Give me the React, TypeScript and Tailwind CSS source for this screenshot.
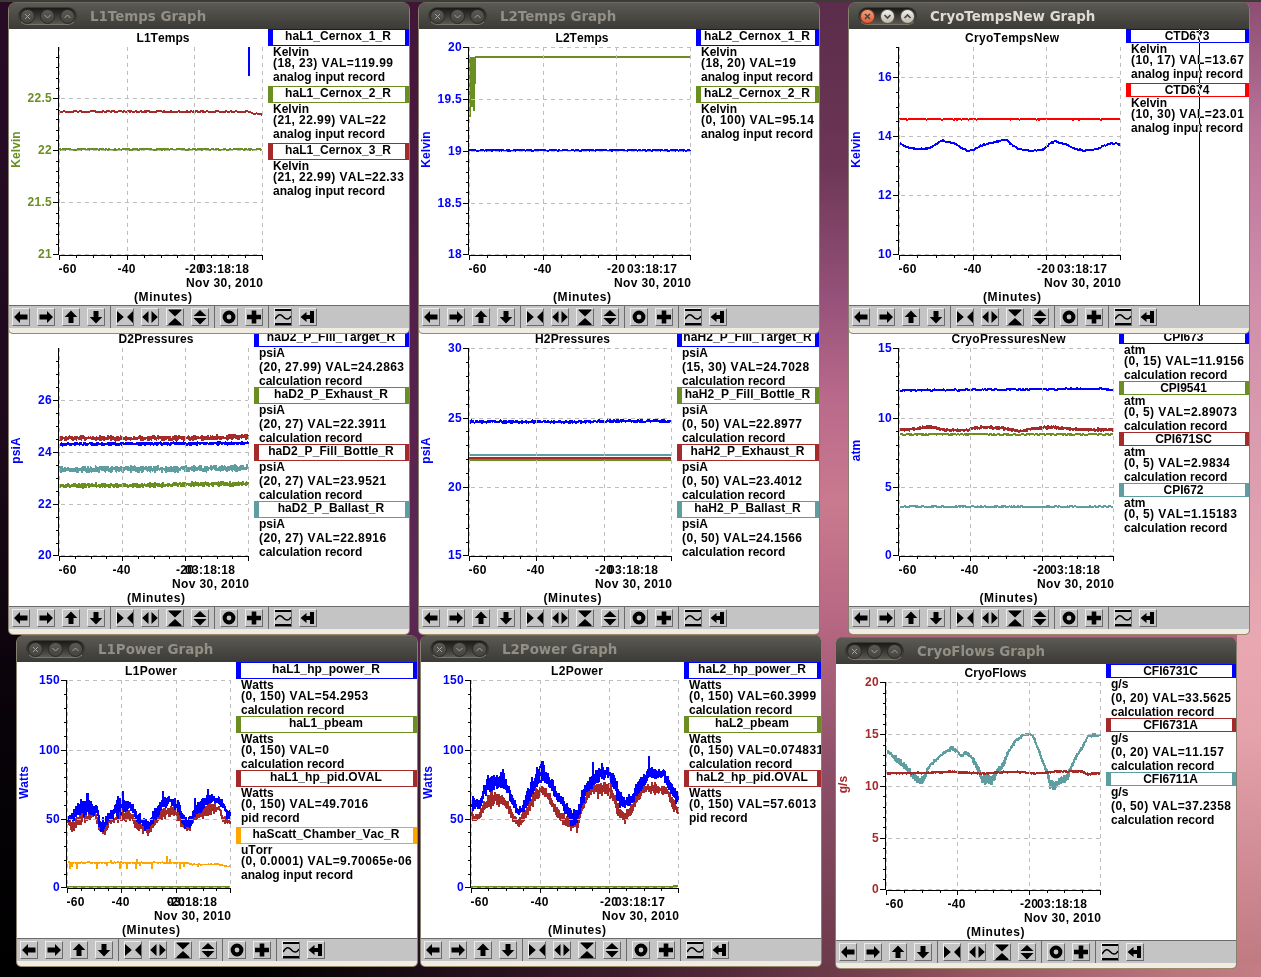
import type { ReactNode } from "react";

const BLUE = "#0000ff";
const GREEN = "#6b8e23";
const BROWN = "#a52a2a";
const TEAL = "#5f9ea0";
const ORANGE = "#ffa500";
const RED = "#ff0000";

// [x, y] for a line, [x, top, bottom] for a noisy band
type Anchor = [number, number] | [number, number, number];

interface Trace {
  color: string;
  points: Anchor[];
  noise?: number;
  width?: number;
  spikes?: [number, number][];
}

interface Channel {
  name: string;
  unit: string;
  value: string;
  record: string;
  color: string;
}

interface Graph {
  name: string;
  x: number;
  y: number;
  active?: boolean;
  cursor?: number;
  plotWidth: number;
  titleWidth: number;
  unit: string;
  axisColor: string;
  min: number;
  max: number;
  major: number;
  minor: number;
  time: string;
  traces: Trace[];
  channels: Channel[];
}

const LEFT = 50;
const TOP = 18;
const BOTTOM = 225;

const graphs: Graph[] = [
  {
    name: "D2Pressures", x: 9, y: 330, plotWidth: 245, titleWidth: 75,
    unit: "psiA", axisColor: BLUE, min: 20, max: 27.99, major: 2, minor: 0.5, time: "03:18:18",
    traces: [
      { color: BLUE, points: [[50, 113, 115.5], [239, 112, 114.5]], noise: 1.1 },
      { color: GREEN, points: [[50, 154, 157.5], [130, 153.5, 157], [239, 151.5, 155.5]], noise: 1.3 },
      { color: BROWN, points: [[50, 106.5, 110], [170, 106.5, 110], [239, 105, 109]], noise: 1.5 },
      { color: TEAL, points: [[50, 137, 142], [170, 136.5, 141.5], [239, 135.500, 140]], noise: 1.800 },
    ],
    channels: [
      { name: "haD2_P_Fill_Target_R", unit: "psiA", value: "(20, 27.99) VAL=24.2863", record: "calculation record", color: BLUE },
      { name: "haD2_P_Exhaust_R", unit: "psiA", value: "(20, 27) VAL=22.3911", record: "calculation record", color: GREEN },
      { name: "haD2_P_Fill_Bottle_R", unit: "psiA", value: "(20, 27) VAL=23.9521", record: "calculation record", color: BROWN },
      { name: "haD2_P_Ballast_R", unit: "psiA", value: "(20, 27) VAL=22.8916", record: "calculation record", color: TEAL },
    ],
  },
  {
    name: "H2Pressures", x: 419, y: 330, plotWidth: 258, titleWidth: 75,
    unit: "psiA", axisColor: BLUE, min: 15, max: 30, major: 5, minor: 1, time: "03:18:18",
    traces: [
      { color: BLUE, points: [[51, 91, 92.5], [170, 91, 92.5], [195, 90, 92], [252, 90.2, 92]], noise: 1.2 },
      { color: TEAL, points: [[50, 125], [252, 125]] },
      { color: GREEN, points: [[50, 130], [252, 130]] },
      { color: BROWN, points: [[50, 128], [252, 128]] },
    ],
    channels: [
      { name: "haH2_P_Fill_Target_R", unit: "psiA", value: "(15, 30) VAL=24.7028", record: "calculation record", color: BLUE },
      { name: "haH2_P_Fill_Bottle_R", unit: "psiA", value: "(0, 50) VAL=22.8977", record: "calculation record", color: GREEN },
      { name: "haH2_P_Exhaust_R", unit: "psiA", value: "(0, 50) VAL=23.4012", record: "calculation record", color: BROWN },
      { name: "haH2_P_Ballast_R", unit: "psiA", value: "(0, 50) VAL=24.1566", record: "calculation record", color: TEAL },
    ],
  },
  {
    name: "CryoPressuresNew", x: 849, y: 330, plotWidth: 270, titleWidth: 114,
    unit: "atm", axisColor: BLUE, min: 0, max: 15, major: 5, minor: 1, time: "03:18:18",
    traces: [
      { color: BLUE, points: [[51, 60.3], [90, 60], [190, 59.3], [250, 58.7], [264, 60]], noise: 0.8 },
      { color: GREEN, points: [[51, 104.3], [264, 104.3]], noise: 0.8 },
      {
        color: BROWN, noise: 0.9,
        points: [[51, 98.5, 101], [68, 97, 100], [79, 95.5, 98], [88, 97, 99.5], [96, 99, 101.5], [118, 99, 101.5], [124, 96.5, 99], [138, 95.5, 98.5], [153, 97, 99.5], [171, 100, 102.5], [179, 98, 100.5], [204, 95.5, 98.5], [224, 98, 100.5], [264, 98.5, 101.5]],
      },
      { color: TEAL, points: [[51, 176.7], [264, 176.7]], noise: 0.7 },
    ],
    channels: [
      { name: "CPI673", unit: "atm", value: "(0, 15) VAL=11.9156", record: "calculation record", color: BLUE },
      { name: "CPI9541", unit: "atm", value: "(0, 5) VAL=2.89073", record: "calculation record", color: GREEN },
      { name: "CPI671SC", unit: "atm", value: "(0, 5) VAL=2.9834", record: "calculation record", color: BROWN },
      { name: "CPI672", unit: "atm", value: "(0, 5) VAL=1.15183", record: "calculation record", color: TEAL },
    ],
  },
  {
    name: "L1Temps", x: 9, y: 29, plotWidth: 259, titleWidth: 53,
    unit: "Kelvin", axisColor: GREEN, min: 21, max: 22.99, major: 0.5, minor: 0.1, time: "03:18:18",
    traces: [
      { color: BLUE, points: [[240, 18], [240, 47]] },
      { color: GREEN, points: [[50, 120.4], [253, 120.4]], noise: 0.7 },
      { color: BROWN, points: [[50, 82.5], [239, 82.7], [245, 84.5], [253, 85.7]], noise: 0.6 },
    ],
    channels: [
      { name: "haL1_Cernox_1_R", unit: "Kelvin", value: "(18, 23) VAL=119.99", record: "analog input record", color: BLUE },
      { name: "haL1_Cernox_2_R", unit: "Kelvin", value: "(21, 22.99) VAL=22", record: "analog input record", color: GREEN },
      { name: "haL1_Cernox_3_R", unit: "Kelvin", value: "(21, 22.99) VAL=22.33", record: "analog input record", color: BROWN },
    ],
  },
  {
    name: "L2Temps", x: 419, y: 29, plotWidth: 277, titleWidth: 53,
    unit: "Kelvin", axisColor: BLUE, min: 18, max: 20, major: 0.5, minor: 0.1, time: "03:18:17",
    traces: [
      { color: BLUE, points: [[50, 121.3], [271, 121.3]], noise: 0.5 },
      { color: GREEN, points: [[51, 28], [51, 88], [52, 29], [53, 78], [53, 28], [54, 77], [55, 28], [55, 82], [56, 31], [56, 28], [271, 28]] },
    ],
    channels: [
      { name: "haL2_Cernox_1_R", unit: "Kelvin", value: "(18, 20) VAL=19", record: "analog input record", color: BLUE },
      { name: "haL2_Cernox_2_R", unit: "Kelvin", value: "(0, 100) VAL=95.14", record: "analog input record", color: GREEN },
    ],
  },
  {
    name: "CryoTempsNew", x: 849, y: 29, active: true, cursor: 350, plotWidth: 277, titleWidth: 94,
    unit: "Kelvin", axisColor: BLUE, min: 10, max: 17, major: 2, minor: 0.5, time: "03:18:17",
    traces: [
      { color: RED, points: [[50, 90.2], [271, 90.2]], noise: 0.5 },
      {
        color: BLUE, noise: 0.7,
        points: [[51, 114], [55, 116.5], [59, 118.5], [68, 120], [80, 119.5], [86, 115.5], [94, 111.7], [99, 113.3], [108, 115.7], [113, 119.7], [119, 121.7], [124, 121.3], [128, 118.7], [134, 116], [144, 113.3], [153, 111], [158, 111], [162, 115.3], [168, 118.7], [174, 121.3], [184, 122], [195, 120.3], [201, 114.3], [206, 112.7], [216, 115], [223, 119], [234, 121.7], [249, 120.3], [254, 116.7], [263, 114], [271, 115.5]],
      },
    ],
    channels: [
      { name: "CTD673", unit: "Kelvin", value: "(10, 17) VAL=13.67", record: "analog input record", color: BLUE },
      { name: "CTD674", unit: "Kelvin", value: "(10, 30) VAL=23.01", record: "analog input record", color: RED },
    ],
  },
  {
    name: "L1Power", x: 17, y: 662, plotWidth: 219, titleWidth: 52,
    unit: "Watts", axisColor: BLUE, min: 0, max: 150, major: 50, minor: 10, time: "03:18:18",
    traces: [
      {
        color: BROWN, noise: 2.6,
        points: [[51, 158, 161], [55, 158, 170], [60, 155, 165], [66, 151, 160], [78, 151, 153], [83, 161, 170], [88, 166, 172], [93, 156, 161], [100, 151, 160], [108, 148, 160], [115, 150, 158], [120, 158, 168], [126, 161, 170], [132, 165, 174], [136, 158, 165], [141, 150, 158], [150, 145, 155], [158, 145, 153], [165, 151, 165], [172, 160, 170], [176, 155, 161], [183, 146, 155], [191, 140, 155], [202, 145, 146], [206, 155, 161], [213, 158, 163]],
      },
      {
        color: BLUE, noise: 2.8,
        points: [[51, 153, 160], [56, 151, 158], [61, 141, 153], [70, 136, 153], [80, 143, 153], [83, 156, 168], [88, 158, 168], [93, 148, 158], [101, 138, 155], [106, 136, 150], [115, 143, 150], [120, 150, 158], [128, 156, 168], [132, 160, 168], [138, 145, 158], [143, 138, 151], [153, 135, 140], [161, 136, 150], [166, 155, 165], [173, 155, 165], [178, 145, 155], [185, 136, 148], [191, 133, 141], [203, 136, 141], [210, 146, 155], [213, 148, 156]],
        spikes: [[64, 137], [70, 131], [71, 131], [101, 134], [106, 129], [146, 129], [178, 136], [191, 127]],
      },
      {
        color: ORANGE, width: 1.7, noise: 0.5,
        points: [[51, 200.7], [171, 200.7], [173, 202.7], [200, 202], [208, 204], [213, 204.3]],
        spikes: [[53, 207], [55, 205], [60, 207], [80, 207], [90, 204], [94, 198], [103, 207], [110, 207], [119, 207], [120, 197], [123, 204], [135, 207], [150, 194], [153, 197], [163, 207], [167, 205], [181, 205]],
      },
      { color: GREEN, points: [[50, 225], [213, 225]] },
    ],
    channels: [
      { name: "haL1_hp_power_R", unit: "Watts", value: "(0, 150) VAL=54.2953", record: "calculation record", color: BLUE },
      { name: "haL1_pbeam", unit: "Watts", value: "(0, 150) VAL=0", record: "calculation record", color: GREEN },
      { name: "haL1_hp_pid.OVAL", unit: "Watts", value: "(0, 150) VAL=49.7016", record: "pid record", color: BROWN },
      { name: "haScatt_Chamber_Vac_R", unit: "uTorr", value: "(0, 0.0001) VAL=9.70065e-06", record: "analog input record", color: ORANGE },
    ],
  },
  {
    name: "L2Power", x: 421, y: 662, plotWidth: 263, titleWidth: 52,
    unit: "Watts", axisColor: BLUE, min: 0, max: 150, major: 50, minor: 10, time: "03:18:17",
    traces: [
      {
        color: BROWN, noise: 2.6,
        points: [[51, 148, 155], [54, 155, 161], [59, 148, 155], [64, 138, 146], [71, 131, 145], [81, 131, 141], [86, 138, 148], [91, 150, 158], [97, 158, 165], [104, 148, 158], [111, 135, 145], [116, 126, 138], [122, 125, 131], [129, 133, 141], [136, 146, 155], [142, 151, 161], [151, 160, 168], [156, 160, 168], [160, 145, 155], [166, 131, 138], [172, 121, 131], [181, 121, 133], [189, 120, 133], [194, 135, 145], [199, 148, 158], [204, 150, 161], [209, 145, 153], [216, 131, 141], [222, 123, 131], [234, 121, 131], [246, 126, 131], [251, 135, 148], [257, 145, 151]],
        spikes: [[70, 147], [76, 143], [156, 171], [177, 137], [189, 137], [204, 162], [234, 133]],
      },
      {
        color: BLUE, noise: 3,
        points: [[51, 135, 150], [59, 138, 148], [62, 125, 135], [67, 115, 130], [74, 115, 128], [82, 110, 126], [87, 123, 133], [92, 135, 145], [97, 146, 153], [102, 145, 150], [106, 128, 145], [112, 115, 131], [121, 101, 121], [126, 110, 120], [132, 118, 131], [137, 131, 141], [142, 136, 148], [151, 150, 165], [157, 148, 160], [161, 128, 145], [166, 121, 131], [172, 110, 128], [181, 105, 116], [189, 106, 116], [194, 113, 131], [199, 131, 143], [205, 138, 146], [211, 131, 141], [219, 115, 128], [229, 105, 115], [242, 107, 115], [248, 115, 128], [252, 126, 138], [257, 128, 141]],
        spikes: [[67, 113], [82, 107], [116, 105], [120, 99], [122, 99], [172, 100], [181, 101], [228, 94]],
      },
      { color: GREEN, points: [[50, 225], [252, 225], [253, 224], [257, 224]] },
    ],
    channels: [
      { name: "haL2_hp_power_R", unit: "Watts", value: "(0, 150) VAL=60.3999", record: "calculation record", color: BLUE },
      { name: "haL2_pbeam", unit: "Watts", value: "(0, 150) VAL=0.074831", record: "calculation record", color: GREEN },
      { name: "haL2_hp_pid.OVAL", unit: "Watts", value: "(0, 150) VAL=57.6013", record: "pid record", color: BROWN },
    ],
  },
  {
    name: "CryoFlows", x: 836, y: 664, plotWidth: 270, titleWidth: 62,
    unit: "g/s", axisColor: BROWN, min: 0, max: 20, major: 5, minor: 1, time: "03:18:18",
    traces: [
      {
        color: TEAL, noise: 1.2,
        points: [[51, 85, 88], [56, 90, 94], [62, 93, 99], [69, 99, 106], [76, 107, 115], [84, 114, 121], [88, 111, 119], [92, 102, 106], [99, 95, 98], [107, 88, 91], [116, 82, 86], [121, 85, 89], [125, 90, 93], [131, 87, 91], [136, 92, 96], [141, 99, 107], [146, 110, 120], [156, 111, 121], [161, 105, 111], [167, 98, 104], [172, 87, 91], [179, 76, 79], [186, 70, 73], [196, 69, 71], [201, 80, 83], [206, 94, 98], [211, 104, 111], [214, 114, 125], [219, 117, 127], [224, 114, 121], [232, 109, 117], [236, 99, 103], [241, 90, 93], [247, 81, 84], [252, 71, 73], [264, 70, 72]],
      },
      { color: BROWN, points: [[51, 108.5, 110], [80, 108.6, 109.8], [117, 107, 108.5], [145, 108.7, 110.3], [177, 107, 108.3], [200, 108.7, 110], [224, 106.5, 108], [245, 106.7, 108], [252, 109, 111], [264, 108.5, 110]], noise: 0.7 },
    ],
    channels: [
      { name: "CFI6731C", unit: "g/s", value: "(0, 20) VAL=33.5625", record: "calculation record", color: BLUE },
      { name: "CFI6731A", unit: "g/s", value: "(0, 20) VAL=11.157", record: "calculation record", color: BROWN },
      { name: "CFI6711A", unit: "g/s", value: "(0, 50) VAL=37.2358", record: "calculation record", color: TEAL },
    ],
  },
];

// Small seeded generator so the noise is the same on every render
function random(seed: number) {
  let s = seed;
  return () => {
    s = (s * 16807) % 2147483647;
    return s / 2147483647;
  };
}

function tracePath(trace: Trace) {
  const { points, noise = 0, spikes = [] } = trace;
  if (!noise) return "M" + points.map((p) => `${p[0]} ${p[1]}`).join("L");

  const rnd = random(points.length * 9719 + Math.round(points[0][1] * 3137));
  const out: string[] = [];
  let i = 0;
  for (let x = points[0][0]; x <= points[points.length - 1][0]; x++) {
    while (i < points.length - 2 && points[i + 1][0] <= x) i++;
    const a = points[i];
    const b = points[i + 1];
    const t = (x - a[0]) / (b[0] - a[0]);
    const top = a[1] + (b[1] - a[1]) * t;
    const low = (a[2] ?? a[1]) + ((b[2] ?? b[1]) - (a[2] ?? a[1])) * t;
    const spread = (low - top) * 0.25;
    const y1 = top + rnd() * spread + (rnd() - 0.5) * 2 * noise;
    out.push(`${x} ${y1.toFixed(1)}`);
    if (a[2] !== undefined) {
      const y2 = low - rnd() * spread + (rnd() - 0.5) * 2 * noise;
      out.push(`${x} ${y2.toFixed(1)}`);
    }
    const spike = spikes.find((s) => s[0] === x);
    if (spike) out.push(`${x} ${spike[1]}`, `${x} ${y1.toFixed(1)}`);
  }
  return "M" + out.join("L");
}

function Chart({ graph }: { graph: Graph }) {
  const { plotWidth, min, max, major, minor, axisColor } = graph;
  const right = plotWidth - 6;
  const center = (LEFT + plotWidth) / 2 - 0.5;
  const yOf = (v: number) => {
    if (v <= min) return BOTTOM;
    if (v >= max - 1e-6) return TOP;
    return Math.floor(BOTTOM - ((v - min) / (max - min)) * (BOTTOM - TOP) + 1e-6) + 1;
  };
  const xOf = (m: number) => Math.round(LEFT + (m / 60) * (right - LEFT));

  const majors: number[] = [];
  for (let v = min; v <= max + 1e-6; v += major) majors.push(Math.round(v * 10) / 10);
  const minors: number[] = [];
  for (let v = min; v <= max + 1e-6; v += minor) minors.push(v);

  return (
    <svg
      width={plotWidth}
      height={276}
      className="block shrink-0 font-['Liberation_Sans',Arial,sans-serif] text-[12px] font-bold [font-kerning:none]"
    >
      <text x={center} y={13} textAnchor="middle" textLength={graph.titleWidth}>{graph.name}</text>
      <g fill="none" strokeLinejoin="bevel" shapeRendering="crispEdges">
        {graph.traces.map((t) => (
          <path key={t.color} d={tracePath(t)} stroke={t.color} strokeWidth={t.width ?? 2} />
        ))}
      </g>
      <g stroke="#bebebe" strokeDasharray="4 4" shapeRendering="crispEdges">
        {majors.map((v) => (
          <line key={v} x1={LEFT + 2} x2={right} y1={yOf(v) + 0.5} y2={yOf(v) + 0.5} />
        ))}
        {[0, 20, 40, 60].map((m) => (
          <line key={m} x1={xOf(m) + 0.5} x2={xOf(m) + 0.5} y1={TOP} y2={BOTTOM} />
        ))}
      </g>
      <g stroke="#000" shapeRendering="crispEdges">
        <line x1={LEFT - 0.5} x2={LEFT - 0.5} y1={TOP} y2={BOTTOM + 1} />
        <line x1={LEFT} x2={right + 1} y1={BOTTOM + 1.5} y2={BOTTOM + 1.5} />
        {majors.map((v) => (
          <line key={v} x1={LEFT - 6} x2={LEFT - 1} y1={yOf(v) + 0.5} y2={yOf(v) + 0.5} />
        ))}
        {minors.map((v) => (
          <line key={v} x1={LEFT - 3} x2={LEFT - 1} y1={yOf(v) + 0.5} y2={yOf(v) + 0.5} />
        ))}
        {[0, 5, 10, 15, 20, 25, 30, 35, 40, 45, 50, 55, 60].map((m) => (
          <line key={m} x1={xOf(m) + 0.5} x2={xOf(m) + 0.5} y1={BOTTOM + 1} y2={BOTTOM + (m % 20 ? 4 : 6)} />
        ))}
      </g>
      <g fill={axisColor} textAnchor="end" className="tracking-[0.3px]">
        {majors.map((v) => (
          <text key={v} x={43} y={yOf(v) + 4}>{v}</text>
        ))}
      </g>
      <text fill={axisColor} textAnchor="middle" transform="translate(11 120.5) rotate(-90)" className="tracking-[0.1px]">
        {graph.unit}
      </text>
      <text x={LEFT - 0.5} y={244} textLength={18}>-60</text>
      <text x={xOf(20) - 0.5} y={244} textAnchor="middle" textLength={18}>-40</text>
      <text x={xOf(40)} y={244} textAnchor="middle" textLength={18}>-20</text>
      <text x={right - 38} y={244} textAnchor="middle" textLength={50}>{graph.time}</text>
      <text x={right - 37.5} y={258} textAnchor="middle" textLength={77}>Nov 30, 2010</text>
      <text x={center} y={272} textAnchor="middle" textLength={58}>(Minutes)</text>
    </svg>
  );
}

function Legend({ channels }: { channels: Channel[] }) {
  return (
    <div className="min-w-0 flex-1 overflow-hidden whitespace-nowrap font-['Liberation_Sans',Arial,sans-serif] text-[12px] font-bold leading-[12px] text-black [font-kerning:none]">
      {channels.map((c) => {
        const tall = c.name.includes("_");
        return (
          <div key={c.name}>
            <div
              className={`border-y border-l-[5px] border-r-4 pr-[2px] text-center ${tall ? "h-[17px] tracking-[0.08px]" : "h-[14px]"}`}
              style={{ borderColor: c.color }}
            >
              {c.name}
            </div>
            <div className="pl-[5px]">
              <div className={/[pg]/.test(c.unit) ? "h-[14px] leading-[13px]" : "h-[11px] leading-[13px]"}>{c.unit}</div>
              <div className="h-[14px] tracking-[0.42px]">{c.value}</div>
              <div className={/[gp]/.test(c.record) ? "h-[15px]" : "h-[12px]"}>{c.record}</div>
            </div>
          </div>
        );
      })}
    </div>
  );
}

function ToolButton({ children }: { children: ReactNode }) {
  return (
    <button className="h-[18px] w-[18px] border border-b-[#6b6b6b] border-l-[#ededed] border-r-[#6b6b6b] border-t-[#ededed] bg-[#c4c4c4]">
      <svg viewBox="1 1 16 16" className="block h-4 w-4">
        {children}
      </svg>
    </button>
  );
}

const toolGroups: ReactNode[][] = [
  [
    <path d="M2 9 8 3v3.5h7.5v5H8V15Z" />,
    <path d="M16 9 10 3v3.5H2.5v5H10V15Z" />,
    <path d="M9 2.5 15.3 9H11.5v6h-5V9H2.7Z" />,
    <path d="M9 15.5 15.3 9H11.5V3h-5v6H2.7Z" />,
  ],
  [
    <path d="M1 3v12l6.800-6ZM17 3v12l-6-6Z" />,
    <path d="M7.500 3v12L1.200 9ZM10.500 3v12L16.800 9Z" />,
    <path d="M2.500 1.500h13v.8L9 8.500 2.500 2.300ZM9 10l6.500 6v1h-13v-1Z" />,
    <path d="M9 2 15.500 8h-13ZM9 16.500 15.500 10h-13Z" />,
  ],
  [
    <circle cx={9} cy={9} r={4.4} fill="none" stroke="#000" strokeWidth={4} />,
    <path d="M6.7 2.5h4.600v4.200H16v4.600h-4.700v4.200H6.700v-4.200H2V6.700h4.700Z" />,
  ],
  [
    <g>
      <path d="M1 1h16v2H1ZM1 15h16v2H1Z" />
      <path d="M1 11C4 6 6.500 5.500 9 8.500S14.500 12.500 17 8" fill="none" stroke="#000" strokeWidth={1.5} />
    </g>,
    <path d="M1.500 9 7.500 4v3H11V3h4v12h-4v-4H7.500v3Z" />,
  ],
];

function Toolbar() {
  return (
    <div className="flex h-[23px] border-t border-[#6b6b6b] bg-[#c4c4c4] pl-[3px]">
      {toolGroups.map((icons, g) => (
        <div key={g} className={g ? "ml-[5px] flex gap-[7px] border-l border-[#6b6b6b] pl-[5px] pt-[2px]" : "flex gap-[7px] pt-[2px]"}>
          {icons.map((icon, i) => (
            <ToolButton key={i}>{icon}</ToolButton>
          ))}
        </div>
      ))}
    </div>
  );
}

function WindowButtons({ active }: { active?: boolean }) {
  const shapes = ["M5 5 10 10M10 5 5 10", "M4.500 6 7.500 9l3-3", "M4.500 9 7.500 6l3 3"];
  return (
    <div className="flex h-[18px] w-[59px] items-center justify-center gap-[5px] rounded-full border border-[#3a3934] border-b-[#77756c] bg-gradient-to-b from-[#1b1a18] to-[#5a5952]">
      {shapes.map((d, i) => {
        const fill = !active
          ? "border-[#2b2a27] bg-gradient-to-b from-[#5b5a54] to-[#45443f]"
          : i === 0
            ? "border-[#7a3a20] bg-gradient-to-b from-[#f5a07c] to-[#e4572a]"
            : "border-[#55534c] bg-gradient-to-b from-[#f4f2ee] to-[#bdb8ac]";
        return (
          <span key={i} className={`block h-[15px] w-[15px] rounded-full border ${fill}`}>
            <svg viewBox="1 1 13 13" className="block h-[13px] w-[13px]">
              <path d={d} fill="none" stroke={active ? "#4a4740" : "#a5a39a"} strokeWidth={active ? 1.7 : 1} />
            </svg>
          </span>
        );
      })}
    </div>
  );
}

function GraphWindow({ graph }: { graph: Graph }) {
  return (
    <section
      className="absolute w-[402px] overflow-hidden rounded-b-[5px] rounded-t-[8px] border-x border-b border-b-[#9b8a68] border-l-[#86816f] border-r-[#86816f] bg-[#3c3b37]"
      style={{ left: graph.x - 1, top: graph.y - 27 }}
    >
      <header className="flex h-[27px] items-center gap-[13px] border-t border-[#6e6c62] bg-gradient-to-b from-[#5b5a53] to-[#3b3a36] pl-[9px]">
        <WindowButtons active={graph.active} />
        <h1 className={`pt-px font-['DejaVu_Sans',sans-serif] text-[13.400px] font-bold leading-none ${graph.active ? "text-[#dfdbd2]" : "text-[#928f84]"}`}>
          {graph.name} Graph
        </h1>
      </header>
      <div className="relative flex h-[276px] bg-white">
        <Chart graph={graph} />
        <Legend channels={graph.channels} />
        {graph.cursor && (
          <div className="absolute inset-y-0 w-px bg-white mix-blend-difference" style={{ left: graph.cursor }} />
        )}
      </div>
      <Toolbar />
      <div className="h-[5px] bg-[#f0ebe3]" />
    </section>
  );
}

function Wallpaper() {
  return (
    <div className="absolute inset-0 flex flex-col">
      <div className="h-[2px] bg-[#3c3b37]" />
      <div className="flex flex-1">
        <div className="w-[200px] bg-[linear-gradient(180deg,#280c26_0%,#200a1e_40%,#080308_75%,#000_100%)]" />
        <div className="w-[415px] bg-[linear-gradient(180deg,#421537_0%,#55204a_35%,#602855_62%,#4a1f40_75%,#251020_100%)]" />
        <div className="flex-1 bg-[linear-gradient(180deg,#5b2c4b_0%,#6d3656_17%,#96527a_31%,#b9698a_41%,#c97a8f_52%,#b86883_64%,#8d4f68_80%,#6c3a4b_100%)]" />
        <div className="w-[24px] bg-[linear-gradient(180deg,#8c4e72_0%,#b97398_13%,#d08daa_30%,#d99caf_45%,#e8a8b2_66%,#e6a2ab_76%,#bf7a82_100%)]" />
      </div>
      <div className="h-[14px] bg-[linear-gradient(90deg,#000_0%,#000_20%,#25101d_38%,#3d1c2d_50%,#6b3a49_66%,#98575f_78%,#b9747c_93%,#c47d84_100%)]" />
    </div>
  );
}

export default function App() {
  return (
    <main className="relative h-[977px] w-[1261px] overflow-hidden bg-black">
      <Wallpaper />
      {graphs.map((g) => (
        <GraphWindow key={g.name} graph={g} />
      ))}
    </main>
  );
}
